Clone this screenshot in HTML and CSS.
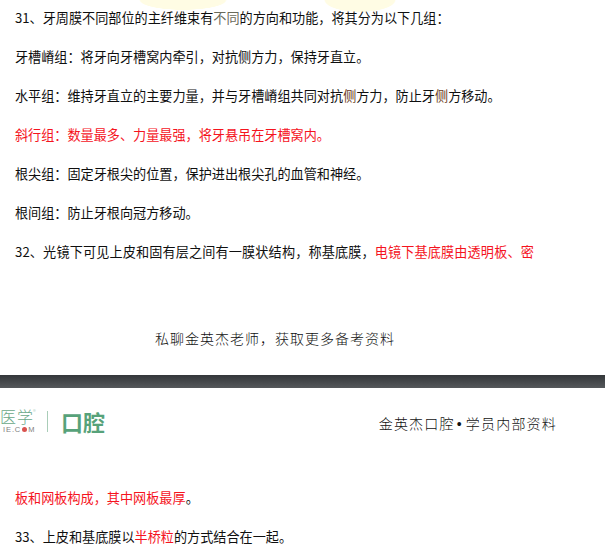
FILE: index.html
```html
<!DOCTYPE html>
<html lang="zh">
<head>
<meta charset="utf-8">
<title>金英杰口腔</title>
<link rel="stylesheet" href="styles.css">
</head>
<body>
<section class="page page-a">
  <div class="glow"></div>
  <p class="line">31、牙周膜不同部位的主纤维束有<span class="faded">不同</span>的方向和功能，将其分为以下几组：</p>
  <p class="line">牙槽嵴组：将牙向牙槽窝内牵引，对抗侧方力，保持牙直立。</p>
  <p class="line">水平组：维持牙直立的主要力量，并与牙槽嵴组共同对抗<span class="tint">侧</span>方力，防止牙<span class="tint">侧</span>方移动。</p>
  <p class="line red">斜行组：数量最多、力量最强，将牙悬吊在牙槽窝内。</p>
  <p class="line">根尖组：固定牙根尖的位置，保护进出根尖孔的血管和神经。</p>
  <p class="line">根间组：防止牙根向冠方移动。</p>
  <p class="line wide">32、光镜下可见上皮和固有层之间有一膜状结构，称基底膜，<span class="red">电镜下基底膜由透明板、密</span></p>
  <p class="footer">私聊金英杰老师，获取更多备考资料</p>
</section>
<div class="divider"></div>
<section class="page page-b">
  <header class="head">
    <div class="brand">
      <div class="logo">
        <span class="logo-cn">医学<sup class="reg">®</sup></span>
        <span class="logo-en">IE.C<i class="dot"></i>M</span>
      </div>
      <span class="rule"></span>
      <span class="dept">口腔</span>
    </div>
    <span class="head-title">金英杰口腔<span class="mid">•</span>学员内部资料</span>
  </header>
  <p class="line first"><span class="red">板和网板构成，其中网板最厚</span>。</p>
  <p class="line">33、上皮和基底膜以<span class="red">半桥粒</span>的方式结合在一起。</p>
</section>
</body>
</html>
```

FILE: styles.css
```css
* { box-sizing: border-box; }
html, body { margin: 0; height: 550px; overflow: hidden; background: #fff; }
body { font-family: "Noto Sans CJK SC", "Noto Sans", sans-serif; color: #0f0f0f; }
.page { position: relative; overflow: hidden; }
.page-a { height: 375px; padding: 8px 0 0 15px; }
.line { position: relative; margin: 0 0 18.8px; font-size: 13.13px; line-height: 20.2px; white-space: nowrap; }
.wide { letter-spacing: .14px; }
.red { color: #f5141e; }
.faded { color: #6a6a5a; }
.tint { color: #6b3a20; }
.glow {
  position: absolute; left: 0; top: 0; width: 100%; height: 16px;
  background:
    radial-gradient(ellipse 44px 10px at 183px 0, #fffce4 96%, transparent 100%),
    radial-gradient(ellipse 36px 12px at 360px 0, #fffce4 96%, transparent 100%);
}
.footer {
  margin: 0; position: absolute; left: 155px; top: 330px;
  font-family: "Liberation Serif", "Noto Sans CJK SC", serif;
  font-size: 14px; font-weight: 300; line-height: 20px; letter-spacing: 1px; color: #111;
}
.divider { height: 13px; background: linear-gradient(#34373a, #55585b); }
.page-b { height: 162px; }
.head { display: flex; justify-content: space-between; align-items: center; height: 70px; padding-right: 48px; }
.brand { display: flex; align-items: center; margin-top: -4px; }
.logo { display: flex; flex-direction: column; width: 47px; }
.logo-cn { font-size: 16px; font-weight: 300; line-height: 15px; letter-spacing: 1px; color: #69a888; white-space: nowrap; }
.reg { font-size: 6px; line-height: 0; color: #a9cdb8; vertical-align: 9px; margin-left: -1px; }
.logo-en { padding-left: 3px; margin-top: 2px; font-family: "Liberation Sans", sans-serif; font-size: 7.5px; line-height: 8px; color: #808080; letter-spacing: .9px; white-space: nowrap; }
.dot { display: inline-block; width: 5px; height: 5px; border-radius: 50%; background: #d9534f; margin: 0 1px; }
.rule { width: 1px; height: 21px; background: #a9cdb8; margin-right: 13px; }
.dept { font-size: 22px; line-height: 26px; font-weight: 700; color: #57a27a; white-space: nowrap; }
.head-title {
  font-family: "Liberation Serif", "Noto Sans CJK SC", serif;
  font-size: 14px; font-weight: 300; letter-spacing: 1.2px; color: #111; white-space: nowrap;
}
.mid { margin: 0 3px 0 2px; font-family: "Liberation Sans", sans-serif; color: #111; }
.first { margin-top: 30px; margin-left: 15px; }
.first ~ .line { margin-left: 15px; }
```
